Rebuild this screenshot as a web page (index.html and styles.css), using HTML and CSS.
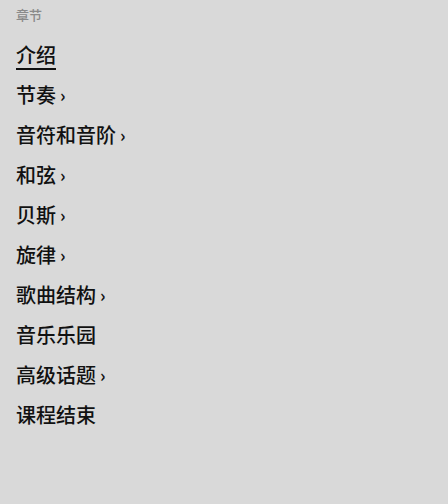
FILE: index.html
```html
<!DOCTYPE html>
<html>
<head>
<meta charset="utf-8">
<link rel="stylesheet" href="styles.css">
</head>
<body>
<nav class="toc">
  <div class="toc-title">章节</div>
  <ul class="toc-list">
    <li class="toc-item active"><span class="label">介绍</span></li>
    <li class="toc-item"><span class="label">节奏</span><span class="chev">›</span></li>
    <li class="toc-item"><span class="label">音符和音阶</span><span class="chev">›</span></li>
    <li class="toc-item"><span class="label">和弦</span><span class="chev">›</span></li>
    <li class="toc-item"><span class="label">贝斯</span><span class="chev">›</span></li>
    <li class="toc-item"><span class="label">旋律</span><span class="chev">›</span></li>
    <li class="toc-item"><span class="label">歌曲结构</span><span class="chev">›</span></li>
    <li class="toc-item"><span class="label">音乐乐园</span></li>
    <li class="toc-item"><span class="label">高级话题</span><span class="chev">›</span></li>
    <li class="toc-item"><span class="label">课程结束</span></li>
  </ul>
</nav>
</body>
</html>
```
FILE: styles.css
```css
html, body {
  margin: 0;
  padding: 0;
  background: #d9d9d9;
  width: 448px;
  height: 504px;
  font-family: "Noto Sans CJK SC", "Noto Sans", sans-serif;
}
.toc {
  padding: 6px 16px;
}
.toc-title {
  font-size: 13px;
  line-height: 18px;
  color: #8a8a8a;
  font-weight: 500;
}
.toc-list {
  list-style: none;
  margin: 11px 0 0 0;
  padding: 0;
}
.toc-item {
  height: 40px;
  display: flex;
  align-items: center;
  font-size: 20px;
  font-weight: 500;
  color: #111;
}
.label {
  line-height: 24px;
}
.toc-item.active .label {
  border-bottom: 2px solid #111;
  line-height: 22px;
  padding-bottom: 2px;
  margin-top: 4px;
}
.chev {
  font-size: 17px;
  font-weight: 700;
  line-height: 16px;
  margin-left: 4px;
  margin-top: 0;
}
```
